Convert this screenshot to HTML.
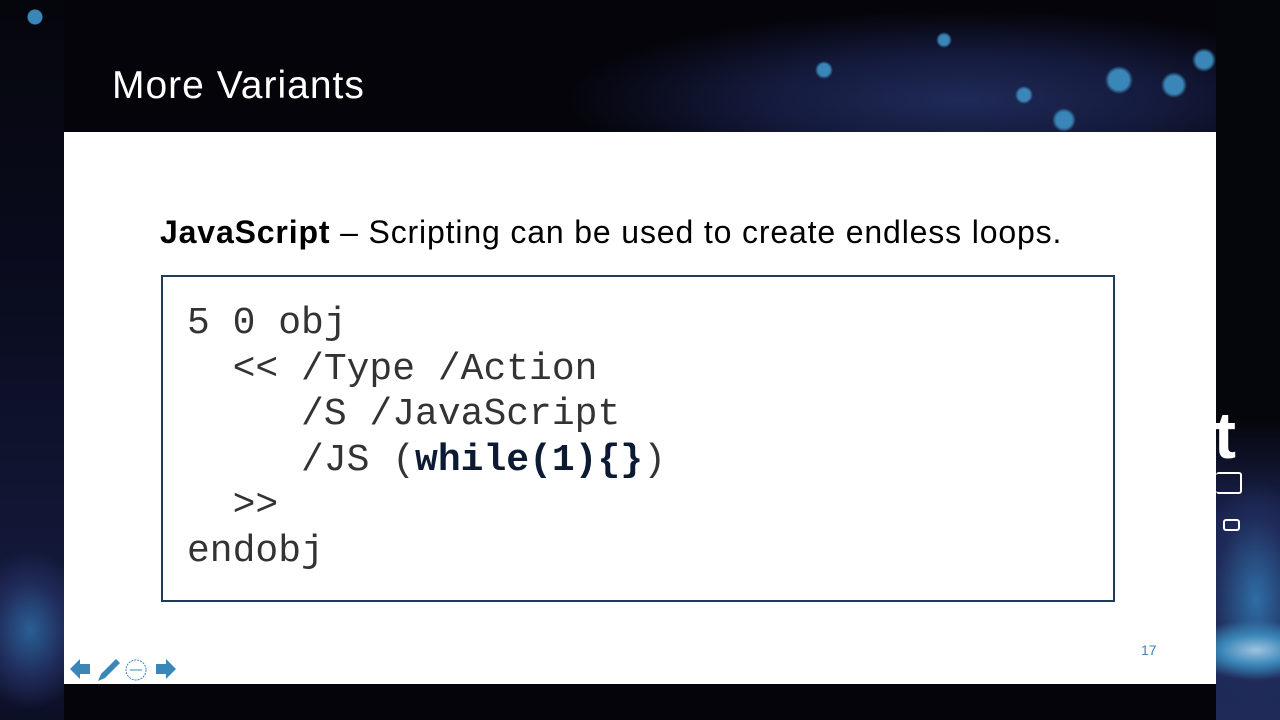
<!DOCTYPE html>
<html><head><meta charset="utf-8"><style>
html,body{margin:0;padding:0}
body{width:1280px;height:720px;position:relative;overflow:hidden;background:#04040a;font-family:"Liberation Sans",sans-serif}
.side{position:absolute;top:0;height:720px;background:#05060c}
#left{left:0;width:64px;background:
radial-gradient(circle at 35px 17px,#3a86b8 0 7px,transparent 8px),
radial-gradient(ellipse 60px 80px at 30px 630px,#2a5f94 0,#1f2a58 60%,transparent 100%),
linear-gradient(#05060c 0,#0a0c20 300px,#141a3c 600px,#0c0f25 720px)}
#right{left:1216px;width:64px;background:
radial-gradient(ellipse 70px 30px at 40px 650px,#9ec3e0 0,#3a86b8 50%,transparent 100%),
radial-gradient(ellipse 60px 120px at 40px 600px,#2f6ea5 0,#1f2a58 70%,transparent 100%),
linear-gradient(#05060c 0,#05060c 420px,#1a2350 520px,#1f2a58 720px)}
#head{position:absolute;left:64px;top:0;width:1152px;height:132px;background:
radial-gradient(circle at 1055px 80px,#3a86b8 0 10px,transparent 14px),
radial-gradient(circle at 1110px 85px,#3a86b8 0 9px,transparent 13px),
radial-gradient(circle at 960px 95px,#3a86b8 0 6px,transparent 9px),
radial-gradient(circle at 1000px 120px,#3a86b8 0 8px,transparent 12px),
radial-gradient(circle at 880px 40px,#3a86b8 0 5px,transparent 8px),
radial-gradient(circle at 760px 70px,#3a86b8 0 6px,transparent 9px),
radial-gradient(circle at 1140px 60px,#3a86b8 0 8px,transparent 12px),
radial-gradient(ellipse 400px 90px at 900px 100px,#1f2a58 0,#141a3c 50%,transparent 100%),
#04040a}
#head h1{position:absolute;left:48px;top:64px;margin:0;color:#fff;font-weight:normal;font-size:39px;line-height:44px;letter-spacing:1px}
#slide{position:absolute;left:64px;top:132px;width:1152px;height:552px;background:#fff}
#lead{position:absolute;left:96px;top:82px;font-size:32px;color:#000;white-space:nowrap;letter-spacing:0.85px}
#box{position:absolute;left:97px;top:143px;width:954px;height:327px;border:2px solid #1f3a5a;box-sizing:border-box}
#code{position:absolute;left:24px;top:24px;margin:0;font-family:"Liberation Mono",monospace;font-size:38px;line-height:45.6px;color:#333}
#code b{color:#0d1a33}
#num{position:absolute;left:1077px;top:510px;font-size:14px;color:#3a86b8}
#logo{position:absolute;left:1214px;top:402px;color:#fff;font-weight:bold;font-size:66px;line-height:66px}
</style></head><body>
<div id="left" class="side"></div>
<div id="right" class="side"></div>
<div id="head"><h1>More Variants</h1></div>
<div id="slide">
<div id="lead"><b>JavaScript</b> – Scripting can be used to create endless loops.</div>
<div id="box"><pre id="code">5 0 obj
  &lt;&lt; /Type /Action
     /S /JavaScript
     /JS (<b>while(1){}</b>)
  &gt;&gt;
endobj</pre></div>
<div id="num">17</div>
<svg style="position:absolute;left:4px;top:522px" width="112" height="30" viewBox="0 0 112 30">
<path d="M2 15 L12 5 L12 10 L22 10 L22 20 L12 20 L12 25 Z" fill="#3a86b8"/>
<path d="M30 27 L33 20 L48 5 L52 9 L37 24 Z" fill="#3a86b8"/>
<circle cx="68" cy="16" r="10" fill="none" stroke="#3a86b8" stroke-width="1" stroke-dasharray="2 1"/>
<path d="M62 16 H74" stroke="#3a86b8" stroke-width="1"/>
<path d="M112 15 L102 5 L102 10 L92 10 L92 20 L102 20 L102 25 Z" transform="translate(-4 0)" fill="#3a86b8"/>
</svg>
</div>
<div style="position:absolute;left:1216px;top:472px;width:26px;height:22px;border:2px solid #fff;border-radius:3px;border-left:none;box-sizing:border-box"></div>
<div style="position:absolute;left:1223px;top:519px;width:17px;height:12px;border:2px solid #fff;border-radius:3px;box-sizing:border-box"></div>
<div id="logo">t</div>
</body></html>
